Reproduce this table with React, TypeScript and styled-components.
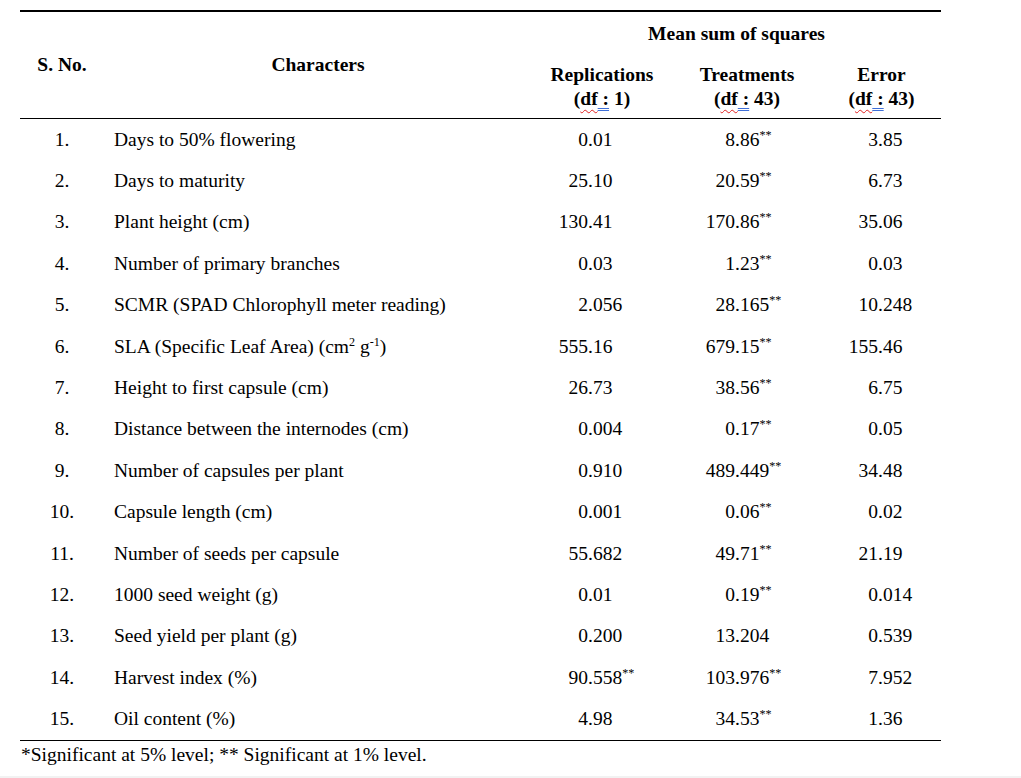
import styled, { createGlobalStyle } from "styled-components";

const GlobalStyle = createGlobalStyle`
  html, body {
    margin: 0;
    padding: 0;
    background: #ffffff;
  }
  body {
    font-family: "Liberation Serif", "Times New Roman", serif;
    color: #000;
  }
`;

interface Row {
  no: string;
  name: React.ReactNode;
  rep: string;
  trt: string;
  err: string;
}

const rows: Row[] = [
  { no: "1.", name: "Days to 50% flowering", rep: "0.01", trt: "8.86**", err: "3.85" },
  { no: "2.", name: "Days to maturity", rep: "25.10", trt: "20.59**", err: "6.73" },
  { no: "3.", name: "Plant height (cm)", rep: "130.41", trt: "170.86**", err: "35.06" },
  { no: "4.", name: "Number of primary branches", rep: "0.03", trt: "1.23**", err: "0.03" },
  { no: "5.", name: "SCMR (SPAD Chlorophyll meter reading)", rep: "2.056", trt: "28.165**", err: "10.248" },
  {
    no: "6.",
    name: (
      <>
        SLA (Specific Leaf Area) (cm<sup>2</sup> g<sup>-1</sup>)
      </>
    ),
    rep: "555.16",
    trt: "679.15**",
    err: "155.46",
  },
  { no: "7.", name: "Height to first capsule (cm)", rep: "26.73", trt: "38.56**", err: "6.75" },
  { no: "8.", name: "Distance between the internodes (cm)", rep: "0.004", trt: "0.17**", err: "0.05" },
  { no: "9.", name: "Number of capsules per plant", rep: "0.910", trt: "489.449**", err: "34.48" },
  { no: "10.", name: "Capsule length (cm)", rep: "0.001", trt: "0.06**", err: "0.02" },
  { no: "11.", name: "Number of seeds per capsule", rep: "55.682", trt: "49.71**", err: "21.19" },
  { no: "12.", name: "1000 seed weight (g)", rep: "0.01", trt: "0.19**", err: "0.014" },
  { no: "13.", name: "Seed yield per plant (g)", rep: "0.200", trt: "13.204", err: "0.539" },
  { no: "14.", name: "Harvest index (%)", rep: "90.558**", trt: "103.976**", err: "7.952" },
  { no: "15.", name: "Oil content (%)", rep: "4.98", trt: "34.53**", err: "1.36" },
];

const Page = styled.div`
  width: 1021px;
  height: 778px;
  box-sizing: border-box;
  padding: 10px 0 0 20px;
  border-bottom: 2px solid #f2f2f2;
`;

const Table = styled.table`
  width: 921px;
  border-collapse: collapse;
  table-layout: fixed;
  font-size: 19.5px;
  border-top: 2px solid #000;
  border-bottom: 1px solid #000;
`;

const HeadRow = styled.tr<{ $last?: boolean }>`
  border-bottom: ${({ $last }) => ($last ? "1px solid #000" : "none")};
`;

const Th = styled.th<{ $h: number }>`
  font-weight: 700;
  padding: 0;
  height: ${({ $h }) => $h}px;
  text-align: center;
  vertical-align: middle;
  line-height: 24px;
`;

const DfMark = styled.span`
  text-decoration: underline wavy #e02020;
  text-decoration-thickness: 1px;
  text-underline-offset: 4px;
`;

const ColonMark = styled.span`
  text-decoration: underline double #3f6fd8;
  text-decoration-thickness: 1px;
  text-underline-offset: 3px;
`;

const Td = styled.td<{ $align?: string; $pad?: number }>`
  height: 41.4px;
  padding: 0 0 0 ${({ $pad }) => $pad ?? 0}px;
  text-align: ${({ $align }) => $align ?? "left"};
  vertical-align: middle;
  line-height: 22px;
  white-space: nowrap;

  sup {
    font-size: 0.62em;
    line-height: 0;
  }
`;

const IntPart = styled.span<{ $w: number }>`
  display: inline-block;
  width: ${({ $w }) => $w}px;
  text-align: right;
`;

const Stars = styled.sup`
  font-size: 12px;
  vertical-align: 0.55em;
  line-height: 0;
`;

const Note = styled.div`
  font-size: 19.5px;
  line-height: 28px;
  padding-left: 1px;
  margin-top: 0px;
`;

function DfLabel({ n }: { n: string }) {
  return (
    <>
      (<DfMark>df</DfMark>
      <ColonMark> :</ColonMark> {n})
    </>
  );
}

function Num({ value, w }: { value: string; w: number }) {
  const stars = value.endsWith("**");
  const v = stars ? value.slice(0, -2) : value;
  const dot = v.indexOf(".");
  return (
    <>
      <IntPart $w={w}>{v.slice(0, dot)}</IntPart>
      {v.slice(dot)}
      {stars && <Stars>**</Stars>}
    </>
  );
}

export default function App() {
  return (
    <>
      <GlobalStyle />
      <Page>
        <Table>
          <colgroup>
            <col style={{ width: 84 }} />
            <col style={{ width: 428 }} />
            <col style={{ width: 140 }} />
            <col style={{ width: 150 }} />
            <col style={{ width: 119 }} />
          </colgroup>
          <thead>
            <HeadRow>
              <Th $h={44} rowSpan={2}>S. No.</Th>
              <Th $h={44} rowSpan={2}>Characters</Th>
              <Th $h={44} colSpan={3}>Mean sum of squares</Th>
            </HeadRow>
            <HeadRow $last>
              <Th $h={62}>
                Replications
                <br />
                <DfLabel n="1" />
              </Th>
              <Th $h={62}>
                Treatments
                <br />
                <DfLabel n="43" />
              </Th>
              <Th $h={62}>
                Error
                <br />
                <DfLabel n="43" />
              </Th>
            </HeadRow>
          </thead>
          <tbody>
            {rows.map((r) => (
              <tr key={r.no}>
                <Td $align="center">{r.no}</Td>
                <Td $pad={10}>{r.name}</Td>
                <Td>
                  <Num value={r.rep} w={56} />
                </Td>
                <Td>
                  <Num value={r.trt} w={63} />
                </Td>
                <Td>
                  <Num value={r.err} w={56} />
                </Td>
              </tr>
            ))}
          </tbody>
        </Table>
        <Note>*Significant at 5% level; ** Significant at 1% level.</Note>
      </Page>
    </>
  );
}
